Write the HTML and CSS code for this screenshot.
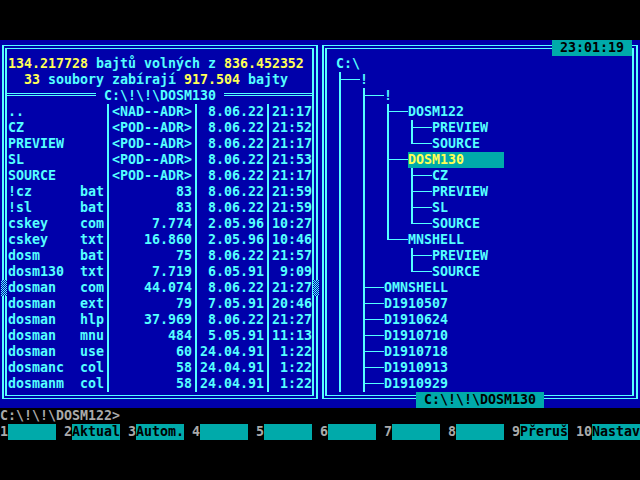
FILE: index.html
```html
<!DOCTYPE html>
<html lang="cs">
<head>
<meta charset="utf-8">
<title>DOS Manager</title>
<link rel="stylesheet" href="styles.css">
</head>
<body>
<div class="screen">
  <div class="panels">
    <section class="panel">
      <div class="frame">
        <div class="frame-in">
          <div class="info">
            <div class="line"><span class="y">134.217728</span> bajtů volných z <span class="y">836.452352</span></div>
            <div class="line">  <span class="y">33</span> soubory zabírají <span class="y">917.504</span> bajty</div>
          </div>
          <div class="title-sep"><span class="rule rule-l"></span><span class="title"> C:\!\!\DOSM130 </span><span class="rule"></span></div>
          <div class="files">
            <div class="row"><span>..</span><span></span><span>&lt;NAD--ADR&gt;</span><span class="r">8.06.22</span><span class="r">21:17</span></div>
            <div class="row"><span>CZ</span><span></span><span>&lt;POD--ADR&gt;</span><span class="r">8.06.22</span><span class="r">21:52</span></div>
            <div class="row"><span>PREVIEW</span><span></span><span>&lt;POD--ADR&gt;</span><span class="r">8.06.22</span><span class="r">21:17</span></div>
            <div class="row"><span>SL</span><span></span><span>&lt;POD--ADR&gt;</span><span class="r">8.06.22</span><span class="r">21:53</span></div>
            <div class="row"><span>SOURCE</span><span></span><span>&lt;POD--ADR&gt;</span><span class="r">8.06.22</span><span class="r">21:17</span></div>
            <div class="row"><span>!cz</span><span>bat</span><span class="r">83</span><span class="r">8.06.22</span><span class="r">21:59</span></div>
            <div class="row"><span>!sl</span><span>bat</span><span class="r">83</span><span class="r">8.06.22</span><span class="r">21:59</span></div>
            <div class="row"><span>cskey</span><span>com</span><span class="r">7.774</span><span class="r">2.05.96</span><span class="r">10:27</span></div>
            <div class="row"><span>cskey</span><span>txt</span><span class="r">16.860</span><span class="r">2.05.96</span><span class="r">10:46</span></div>
            <div class="row"><span>dosm</span><span>bat</span><span class="r">75</span><span class="r">8.06.22</span><span class="r">21:57</span></div>
            <div class="row"><span>dosm130</span><span>txt</span><span class="r">7.719</span><span class="r">6.05.91</span><span class="r">9:09</span></div>
            <div class="row"><span>dosman</span><span>com</span><span class="r">44.074</span><span class="r">8.06.22</span><span class="r">21:27</span></div>
            <div class="row"><span>dosman</span><span>ext</span><span class="r">79</span><span class="r">7.05.91</span><span class="r">20:46</span></div>
            <div class="row"><span>dosman</span><span>hlp</span><span class="r">37.969</span><span class="r">8.06.22</span><span class="r">21:27</span></div>
            <div class="row"><span>dosman</span><span>mnu</span><span class="r">484</span><span class="r">5.05.91</span><span class="r">11:13</span></div>
            <div class="row"><span>dosman</span><span>use</span><span class="r">60</span><span class="r">24.04.91</span><span class="r">1:22</span></div>
            <div class="row"><span>dosmanc</span><span>col</span><span class="r">58</span><span class="r">24.04.91</span><span class="r">1:22</span></div>
            <div class="row"><span>dosmanm</span><span>col</span><span class="r">58</span><span class="r">24.04.91</span><span class="r">1:22</span></div>
          </div>
        </div>
      </div>
      <span class="thumb thumb-l"></span>
      <span class="thumb thumb-r"></span>
    </section>
    <section class="panel">
      <div class="frame">
        <div class="frame-in tree-area">
          <div class="root">C:\</div>
          <ul class="tree">
            <li>!
              <ul>
                <li>!
                  <ul>
                    <li>DOSM122
                      <ul>
                        <li>PREVIEW</li>
                        <li class="end">SOURCE</li>
                      </ul>
                    </li>
                    <li><span class="sel">DOSM130</span>
                      <ul>
                        <li>CZ</li>
                        <li>PREVIEW</li>
                        <li>SL</li>
                        <li class="end">SOURCE</li>
                      </ul>
                    </li>
                    <li class="end">MNSHELL
                      <ul>
                        <li>PREVIEW</li>
                        <li class="end">SOURCE</li>
                      </ul>
                    </li>
                  </ul>
                </li>
                <li>OMNSHELL</li>
                <li>D1910507</li>
                <li>D1910624</li>
                <li>D1910710</li>
                <li>D1910718</li>
                <li>D1910913</li>
                <li>D1910929</li>
              </ul>
            </li>
          </ul>
        </div>
      </div>
      <div class="clock">23:01:19</div>
      <div class="path">C:\!\!\DOSM130</div>
    </section>
  </div>
  <div class="cmd">C:\!\!\DOSM122&gt;</div>
  <div class="fkeys">
    <span class="fk"><span class="num">1</span><span class="lbl"></span></span>
    <span class="fk"><span class="num">2</span><span class="lbl">Aktual</span></span>
    <span class="fk"><span class="num">3</span><span class="lbl">Autom.</span></span>
    <span class="fk"><span class="num">4</span><span class="lbl"></span></span>
    <span class="fk"><span class="num">5</span><span class="lbl"></span></span>
    <span class="fk"><span class="num">6</span><span class="lbl"></span></span>
    <span class="fk"><span class="num">7</span><span class="lbl"></span></span>
    <span class="fk"><span class="num">8</span><span class="lbl"></span></span>
    <span class="fk"><span class="num">9</span><span class="lbl">Přeruš</span></span>
    <span class="fk"><span class="num">10</span><span class="lbl">Nastav</span></span>
  </div>
</div>
</body>
</html>
```
FILE: styles.css
```css
* { box-sizing: border-box; }
html, body { margin: 0; padding: 0; background: #000; }
body {
  width: 640px;
  height: 480px;
  overflow: hidden;
  font-family: "DejaVu Sans Mono", "Liberation Mono", monospace;
  font-size: 13.29px;
  font-weight: bold;
  line-height: 16px;
  color: #55ffff;
}
.screen { padding-top: 40px; }
.panels { display: flex; height: 368px; background: #0000aa; }
.panel { position: relative; width: 320px; height: 368px; padding: 5px 2px 9px; }
.frame {
  height: 100%;
  border: solid #55ffff;
  border-width: 1px 2px;
  padding: 2px 2px 2px 1px;
}
.frame-in {
  height: 100%;
  border: solid #55ffff;
  border-width: 1px 2px;
  padding: 7px 0 3px;
  overflow: hidden;
}
.info { padding-left: 1px; }
.line { height: 16px; white-space: pre; }
.y { color: #ffff55; }
.title-sep { display: flex; height: 16px; }
.rule {
  flex: 1;
  height: 3px;
  margin-top: 5px;
  border-top: 1px solid #55ffff;
  border-bottom: 1px solid #55ffff;
}
.rule-l { flex: 0 0 89px; }
.title { white-space: pre; }
.files {
  margin-left: 1px;
  height: 288px;
  background:
    linear-gradient(#55ffff, #55ffff) 99px 0 / 2px 100% no-repeat,
    linear-gradient(#55ffff, #55ffff) 187px 0 / 2px 100% no-repeat,
    linear-gradient(#55ffff, #55ffff) 259px 0 / 2px 100% no-repeat;
}
.row {
  display: grid;
  grid-template-columns: 64px 24px 80px 64px 40px;
  column-gap: 8px;
  height: 16px;
  white-space: pre;
}
.r { text-align: right; }
.thumb {
  position: absolute;
  top: 240px;
  width: 6px;
  height: 16px;
  background: repeating-conic-gradient(#55ffff 0 25%, #0000aa 0 50%) 0 0 / 2px 2px;
}
.thumb-l { left: 1px; }
.thumb-r { left: 313px; }

.tree-area { padding-left: 9px; }
.root { height: 16px; }
.tree, .tree ul { list-style: none; margin: 0 0 0 3px; padding: 0; }
.tree li { position: relative; padding-left: 21px; line-height: 16px; }
.tree li::before {
  content: "";
  position: absolute;
  left: 0;
  top: 0;
  width: 2px;
  height: 100%;
  background: #55ffff;
}
.tree li.end::before { height: 8px; }
.tree li::after {
  content: "";
  position: absolute;
  left: 0;
  top: 7px;
  width: 21px;
  height: 1px;
  background: #55ffff;
}
.sel { display: inline-block; width: 96px; background: #00aaaa; color: #ffff55; }
.clock, .path {
  position: absolute;
  height: 16px;
  background: #00aaaa;
  color: #000;
  padding-left: 8px;
  white-space: pre;
}
.clock { top: 0; left: 232px; width: 80px; }
.path { top: 352px; left: 96px; width: 128px; }

.cmd { height: 16px; color: #aaaaaa; white-space: pre; }
.fkeys { display: flex; height: 16px; }
.fk { display: flex; }
.fk + .fk { margin-left: 8px; }
.num { color: #aaaaaa; }
.lbl { display: inline-block; width: 48px; height: 16px; background: #00aaaa; color: #000; white-space: pre; }
```
